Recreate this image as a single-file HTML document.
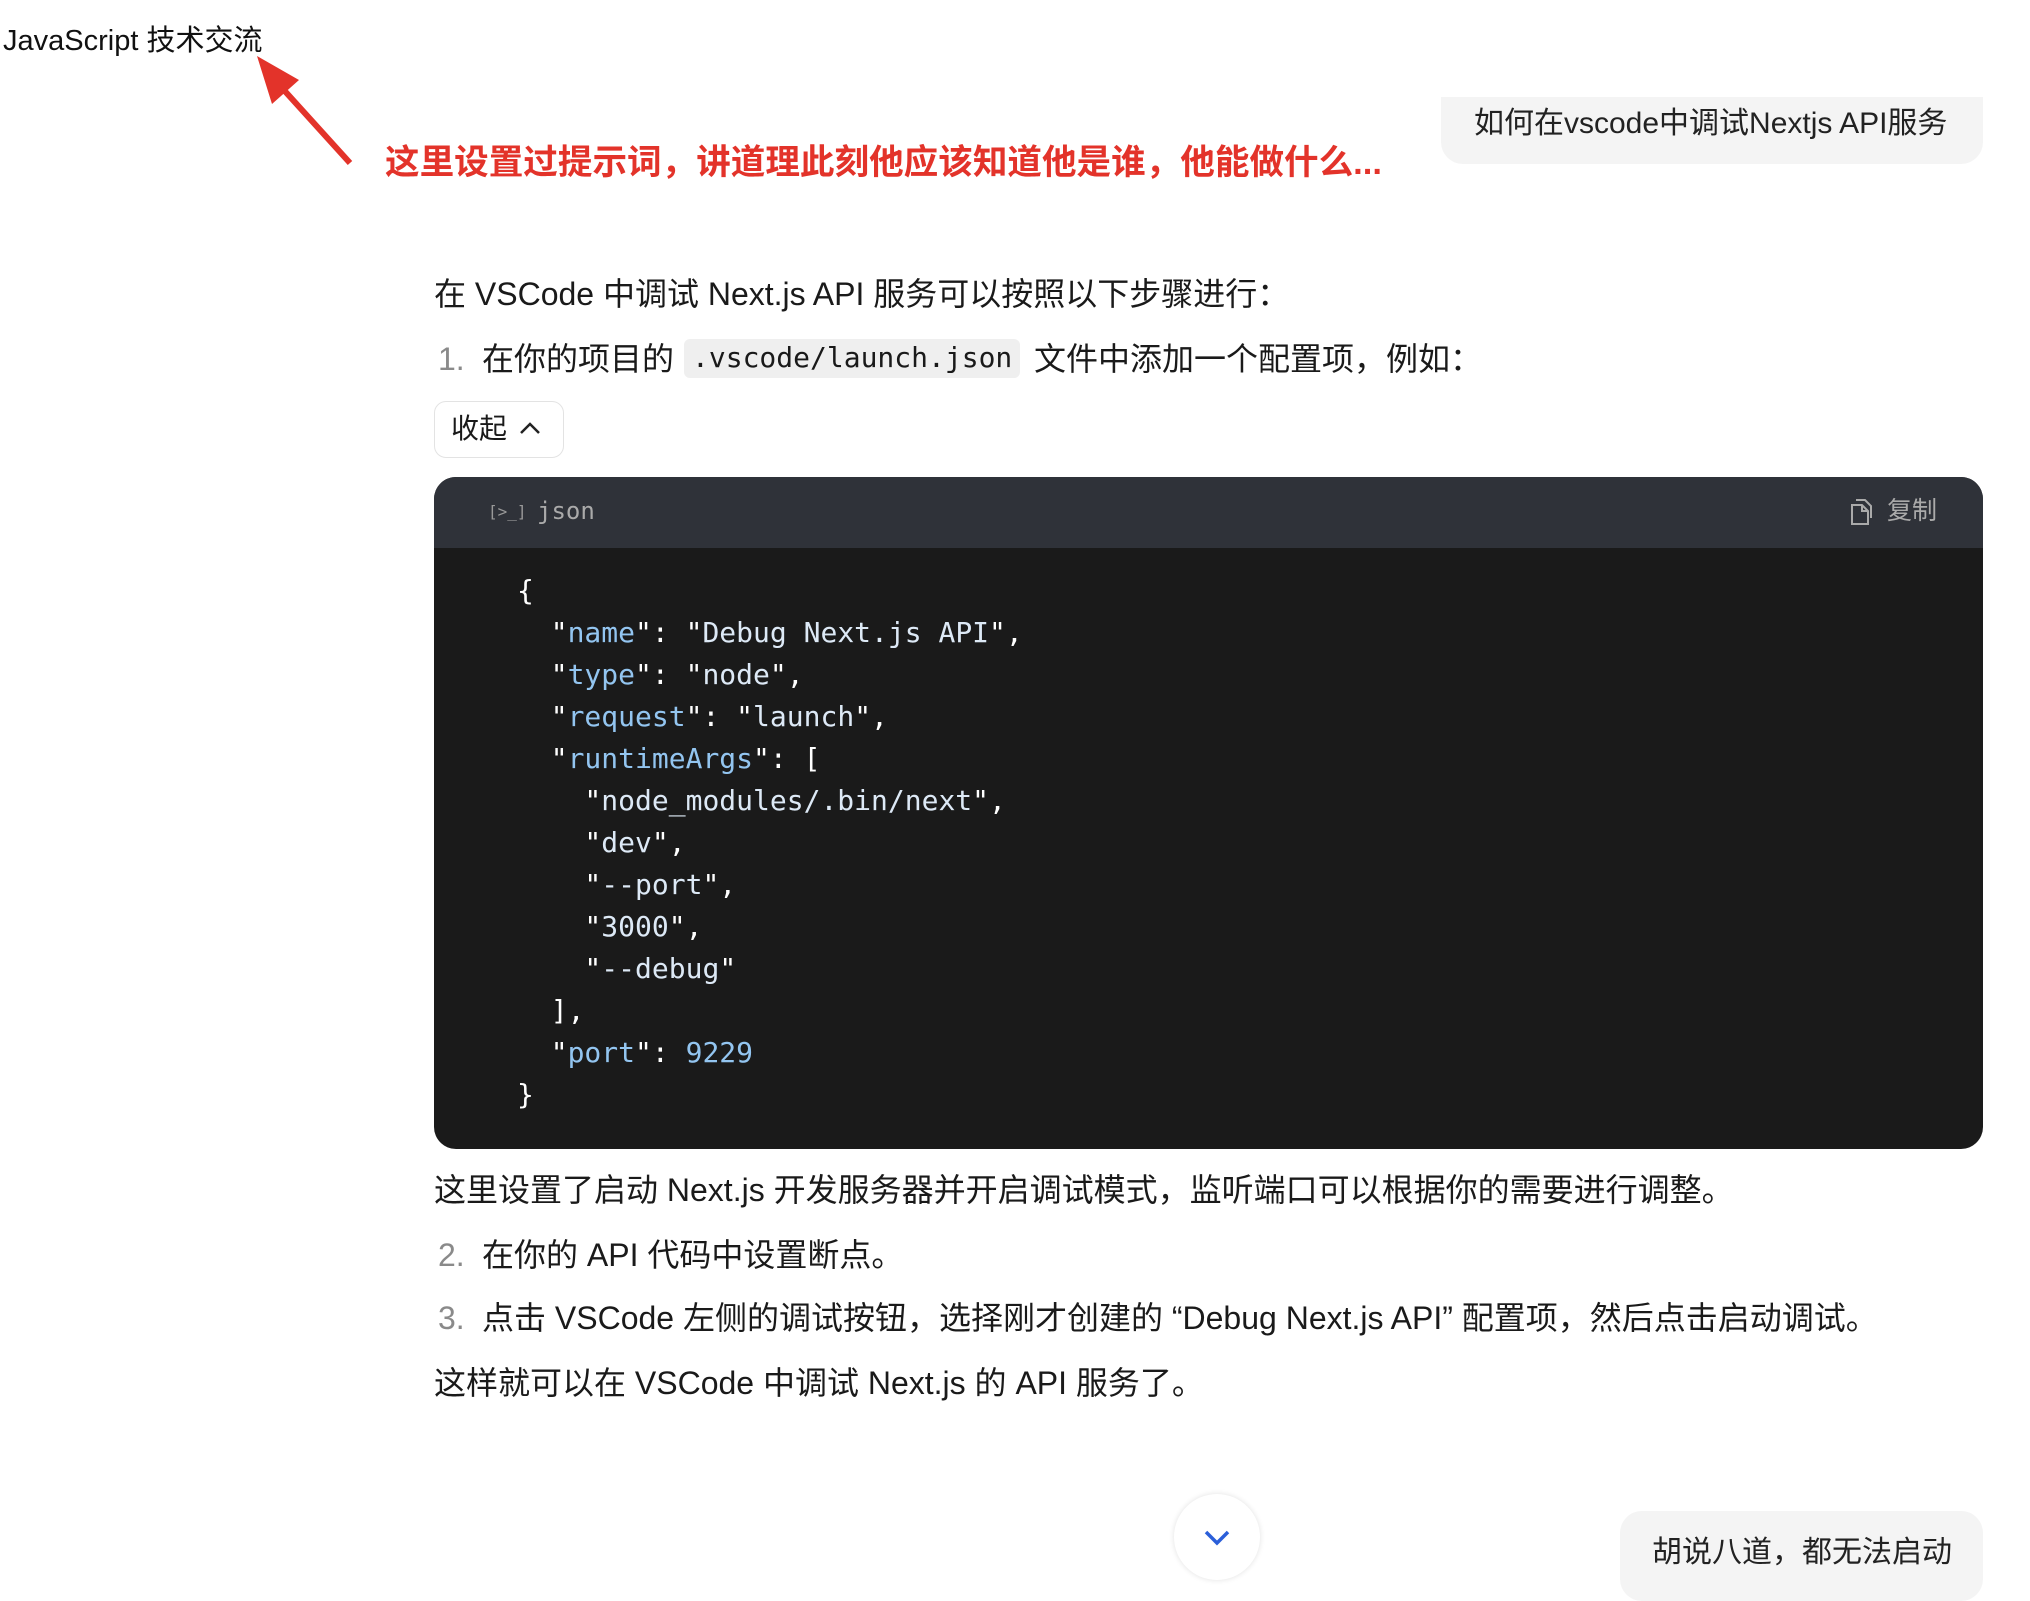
<!DOCTYPE html>
<html><head><meta charset="utf-8"><style>
*{margin:0;padding:0;box-sizing:border-box}
body{width:2030px;height:1593px;background:#fff;position:relative;overflow:hidden;font-family:"Liberation Sans","Noto Sans CJK SC",sans-serif;color:#1a1a1a}
.a{position:absolute;white-space:nowrap}
.t{font-size:32px;line-height:40px}
.num{color:#8a8a8a}
.code{font-family:"DejaVu Sans Mono","Liberation Mono",monospace}
.pre{position:absolute;left:517px;top:570px;font-size:28px;line-height:42px;color:#fff;white-space:pre}
.k{color:#93c5f0}.s{color:#dde9f6}
</style></head><body>
<div class="a" style="left:3px;top:23px;font-size:29px;line-height:36px;color:#111">JavaScript 技术交流</div>
<svg class="a" style="left:245px;top:50px" width="115" height="120"><line x1="105" y1="113" x2="28" y2="28" stroke="#e3332a" stroke-width="6"/><polygon points="12,6 54,30 27,54" fill="#e3332a"/></svg>
<div class="a" style="left:385px;top:143px;font-size:34.6px;line-height:40px;font-weight:bold;color:#e3332a">这里设置过提示词，讲道理此刻他应该知道他是谁，他能做什么...</div>
<div class="a" style="left:1441px;top:97px;width:542px;height:67px;background:#f4f4f4;border-radius:0 0 22px 22px"></div>
<div class="a" style="left:1474px;top:104px;font-size:30px;line-height:40px;color:#222">如何在vscode中调试Nextjs API服务</div>
<div class="a t" style="left:434px;top:274px">在 VSCode 中调试 Next.js API 服务可以按照以下步骤进行：</div>
<div class="a t num" style="left:438px;top:339px">1.</div>
<div class="a t" style="left:482px;top:339px">在你的项目的</div>
<div class="a" style="left:684px;top:339px;width:336px;height:39px;background:#efefef;border-radius:6px"></div>
<div class="a code" style="left:692px;top:341px;font-size:28px;line-height:34px">.vscode/launch.json</div>
<div class="a t" style="left:1034px;top:339px">文件中添加一个配置项，例如：</div>
<div class="a" style="left:434px;top:401px;width:130px;height:57px;border:1.5px solid #e3e3e3;border-radius:12px"></div>
<div class="a" style="left:451px;top:409px;font-size:28px;line-height:40px">收起</div>
<svg class="a" style="left:518px;top:417px" width="24" height="24"><path d="M3 16 L12 7 L21 16" stroke="#222" stroke-width="2.5" fill="none"/></svg>
<div class="a" style="left:434px;top:477px;width:1549px;height:672px;background:#1a1a1a;border-radius:22px;overflow:hidden"><div style="height:71px;background:#2f3239"></div></div>
<div class="a code" style="left:488px;top:497px;font-size:16px;line-height:30px;color:#999">[&gt;_]</div>
<div class="a code" style="left:537px;top:494px;font-size:24px;line-height:34px;color:#aaa">json</div>
<svg class="a" style="left:1847px;top:496px" width="26" height="30"><path d="M5 9 h10 l6 6 v13 h-16 z M9 4 h9 l6 6 v12 M15 9 v6 h6" stroke="#aaa" stroke-width="2" fill="none"/></svg>
<div class="a" style="left:1887px;top:495px;font-size:25px;line-height:32px;color:#aaa">复制</div>
<div class="pre code">{
  "<span class="k">name</span>": "<span class="s">Debug Next.js API</span>",
  "<span class="k">type</span>": "<span class="s">node</span>",
  "<span class="k">request</span>": "<span class="s">launch</span>",
  "<span class="k">runtimeArgs</span>": [
    "<span class="s">node_modules/.bin/next</span>",
    "<span class="s">dev</span>",
    "<span class="s">--port</span>",
    "<span class="s">3000</span>",
    "<span class="s">--debug</span>"
  ],
  "<span class="k">port</span>": <span class="k">9229</span>
}</div>
<div class="a t" style="left:434px;top:1170px">这里设置了启动 Next.js 开发服务器并开启调试模式，监听端口可以根据你的需要进行调整。</div>
<div class="a t num" style="left:438px;top:1235px">2.</div>
<div class="a t" style="left:482px;top:1235px">在你的 API 代码中设置断点。</div>
<div class="a t num" style="left:438px;top:1298px">3.</div>
<div class="a t" style="left:482px;top:1298px">点击 VSCode 左侧的调试按钮，选择刚才创建的 “Debug Next.js API” 配置项，然后点击启动调试。</div>
<div class="a t" style="left:434px;top:1363px">这样就可以在 VSCode 中调试 Next.js 的 API 服务了。</div>
<div class="a" style="left:1174px;top:1494px;width:86px;height:86px;border-radius:50%;background:#fff;box-shadow:0 0 6px rgba(0,0,0,.12)"></div>
<svg class="a" style="left:1202px;top:1525px" width="30" height="24"><path d="M4 7 L15 18 L26 7" stroke="#2b5fd9" stroke-width="3.5" fill="none"/></svg>
<div class="a" style="left:1620px;top:1511px;width:363px;height:90px;background:#f4f4f4;border-radius:22px"></div>
<div class="a" style="left:1652px;top:1533px;font-size:30px;line-height:40px;color:#222">胡说八道，都无法启动</div>
</body></html>
